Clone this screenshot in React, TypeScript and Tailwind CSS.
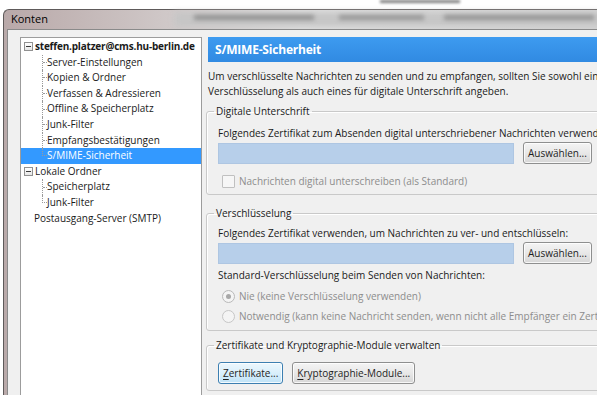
import React from 'react';

// Tree connector: dotted lines that join child rows to their parent
const Connector = ({ last }: { last?: boolean }) =>
  last ? (
    <div className="w-[5px] h-1/2 self-start border-l border-b border-dotted border-[#9a9a9a] shrink-0" />
  ) : (
    <div className="w-[5px] self-stretch border-l border-dotted border-[#9a9a9a] flex items-center shrink-0">
      <div className="w-full border-t border-dotted border-[#9a9a9a]" />
    </div>
  );

const MinusBox = () => (
  <div className="w-[9px] h-[9px] border border-[#919191] bg-gradient-to-b from-white to-[#e6e6e6] flex items-center justify-center shrink-0">
    <div className="w-[5px] h-px bg-[#3a3a3a]" />
  </div>
);

const ChildRow = ({ label, last, selected }: { label: string; last?: boolean; selected?: boolean }) => (
  <div className={`h-[15.6px] flex items-stretch ${selected ? 'bg-[#3399ff] text-white' : ''}`}>
    <div className="w-[21px] shrink-0" />
    <Connector last={last} />
    <span className="leading-[15.6px] whitespace-nowrap">{label}</span>
  </div>
);

const Button = ({ children, focused }: { children: React.ReactNode; focused?: boolean }) => (
  <button
    className={`h-[22px] px-[4px] rounded-[3px] border whitespace-nowrap text-[#1e1e1e] shadow-[inset_0_0_0_1px_rgba(255,255,255,0.8)] ${
      focused
        ? 'border-[#3c7fb1] bg-gradient-to-b from-[#ecf7fd] via-[#d9effb] to-[#bfe3f7]'
        : 'border-[#8e8f8f] bg-gradient-to-b from-[#f4f4f4] via-[#e8e8e8] to-[#d6d6d6]'
    }`}
  >
    {children}
  </button>
);

const Legend = ({ children }: { children: React.ReactNode }) => (
  <legend className="-ml-[4px] px-[2px] leading-[15px]">{children}</legend>
);

const App = () => {
  return (
    <div className="w-[597px] h-[395px] overflow-hidden bg-white relative font-['Open_Sans','Noto_Sans',sans-serif] text-[10px] text-[#1a1a1a]">
      {/* what lies behind the window */}
      <div className="h-[9px] relative">
        <div className="absolute left-[380px] top-0 w-[80px] h-[3px] bg-[#7a7a7a] blur-[1.5px]" />
      </div>

      {/* window */}
      <div className="ml-[3px] h-[386px] border-l border-t border-[#5e5a5a] rounded-tl-[6px] bg-gradient-to-r from-[#b9a9a9] via-[#e2e2e2] to-[#d6d6d6] flex flex-col relative">
        {/* blurred glass behind the title */}
        <div className="absolute left-[170px] top-[2px] w-[430px] h-[15px] bg-[#c6c6c6] blur-[3px]" />
        <div className="absolute left-[190px] top-[5px] w-[120px] h-[5px] bg-[#929292] blur-[2px]" />
        <div className="absolute left-[335px] top-[5px] w-[85px] h-[5px] bg-[#989898] blur-[2px]" />
        <div className="absolute left-[440px] top-[5px] w-[150px] h-[5px] bg-[#949494] blur-[2px]" />

        <div className="h-[19px] pl-[7px] flex items-center relative text-[11px] text-black">Konten</div>

        {/* client area */}
        <div className="ml-[3px] flex-1 border-l border-t border-[#8a8a8a] bg-[#f0f0f0] flex pt-[7px] pl-[12px] gap-[6px] relative">
          {/* account tree */}
          <div className="w-[182px] shrink-0 border border-b-0 border-[#9c9c9c] bg-white pt-px">
            <div className="h-[15.6px] flex items-center pl-[3px]">
              <MinusBox />
              <span className="ml-[2px] font-bold tracking-[-0.2px] whitespace-nowrap">steffen.platzer@cms.hu-berlin.de</span>
            </div>
            <ChildRow label="Server-Einstellungen" />
            <ChildRow label="Kopien & Ordner" />
            <ChildRow label="Verfassen & Adressieren" />
            <ChildRow label="Offline & Speicherplatz" />
            <ChildRow label="Junk-Filter" />
            <ChildRow label="Empfangsbestätigungen" />
            <ChildRow label="S/MIME-Sicherheit" last selected />
            <div className="h-[15.6px] flex items-center pl-[3px]">
              <MinusBox />
              <span className="ml-[2px] whitespace-nowrap">Lokale Ordner</span>
            </div>
            <ChildRow label="Speicherplatz" />
            <ChildRow label="Junk-Filter" last />
            <div className="h-[15.6px] flex items-center pl-[13px] whitespace-nowrap">Postausgang-Server (SMTP)</div>
          </div>

          {/* settings pane */}
          <div className="w-[420px] shrink-0 flex flex-col">
            <div className="h-[25px] bg-gradient-to-b from-[#3d9bf0] to-[#318ae2] flex items-center pl-[7px] text-white font-bold text-[12px] tracking-[-0.2px]">
              S/MIME-Sicherheit
            </div>
            <p className="mt-[7px] leading-[15px] whitespace-nowrap">
              Um verschlüsselte Nachrichten zu senden und zu empfangen, sollten Sie sowohl ein
              <br />
              Verschlüsselung als auch eines für digitale Unterschrift angeben.
            </p>

            <fieldset className="mt-[5px] -ml-[2px] border border-[#c9c9c9] rounded-[3px] shadow-[inset_1px_1px_0_#ffffff] pl-[11px] pb-[5px]">
              <Legend>Digitale Unterschrift</Legend>
              <div className="mt-[7px] leading-[15px] whitespace-nowrap">
                Folgendes Zertifikat zum Absenden digital unterschriebener Nachrichten verwenden:
              </div>
              <div className="mt-px flex items-center gap-[9px]">
                <div className="w-[296px] h-[21px] bg-[#b7cfea] border border-[#aec6e2]" />
                <Button>Auswählen...</Button>
              </div>
              <div className="mt-[10px] h-[15px] flex items-center gap-[4px] pl-[4px] text-[#8d8d8d]">
                <div className="w-[13px] h-[13px] border border-[#c0c0c0] bg-[#f6f6f6] rounded-[1px]" />
                <span className="whitespace-nowrap">Nachrichten digital unterschreiben (als Standard)</span>
              </div>
            </fieldset>

            <fieldset className="mt-[11px] -ml-[2px] border border-[#c9c9c9] rounded-[3px] shadow-[inset_1px_1px_0_#ffffff] pl-[11px] pb-[6px]">
              <Legend>Verschlüsselung</Legend>
              <div className="mt-[5px] leading-[15px] whitespace-nowrap">
                Folgendes Zertifikat verwenden, um Nachrichten zu ver- und entschlüsseln:
              </div>
              <div className="mt-px flex items-center gap-[9px]">
                <div className="w-[296px] h-[21px] bg-[#b7cfea] border border-[#aec6e2]" />
                <Button>Auswählen...</Button>
              </div>
              <div className="mt-[4px] leading-[15px] whitespace-nowrap">
                Standard-Verschlüsselung beim Senden von Nachrichten:
              </div>
              <div className="mt-[6px] h-[15px] flex items-center gap-[4px] pl-[4px] text-[#8d8d8d]">
                <div className="w-[13px] h-[13px] rounded-full border border-[#b9b9b9] bg-[#f4f4f4] flex items-center justify-center">
                  <div className="w-[5px] h-[5px] rounded-full bg-[#a8a8a8]" />
                </div>
                <span className="whitespace-nowrap">Nie (keine Verschlüsselung verwenden)</span>
              </div>
              <div className="mt-[5px] h-[15px] flex items-center gap-[4px] pl-[4px] text-[#8d8d8d]">
                <div className="w-[13px] h-[13px] rounded-full border border-[#c6c6c6] bg-[#f4f4f4]" />
                <span className="whitespace-nowrap">
                  Notwendig (kann keine Nachricht senden, wenn nicht alle Empfänger ein Zertifikat haben)
                </span>
              </div>
            </fieldset>

            <fieldset className="mt-[7px] -ml-[2px] border border-[#c9c9c9] rounded-[3px] shadow-[inset_1px_1px_0_#ffffff] pl-[11px] pb-[6px]">
              <Legend>Zertifikate und Kryptographie-Module verwalten</Legend>
              <div className="mt-[9px] flex items-center gap-[9px]">
                <Button focused>
                  <span className="underline underline-offset-2">Z</span>ertifikate...
                </Button>
                <Button>
                  <span className="underline underline-offset-2">K</span>ryptographie-Module...
                </Button>
              </div>
            </fieldset>
          </div>
        </div>
      </div>
    </div>
  );
};

export default App;
